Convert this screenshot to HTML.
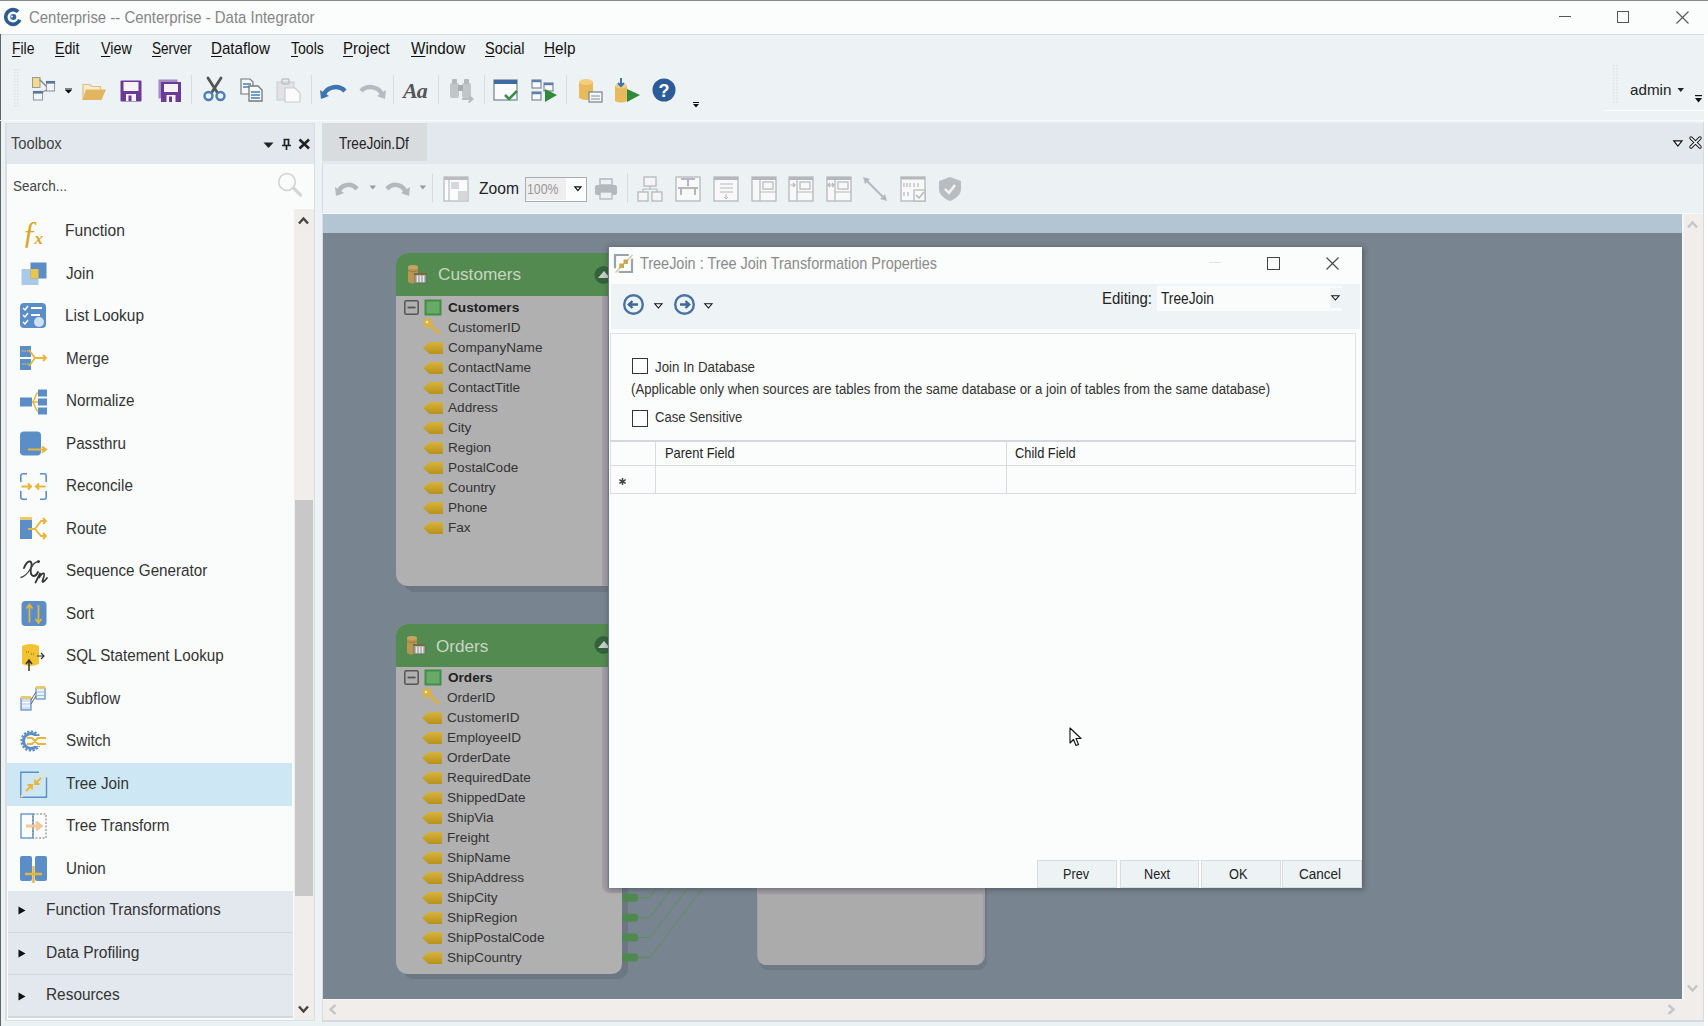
<!DOCTYPE html><html><head><meta charset="utf-8"><style>
html,body{margin:0;padding:0;}
body{width:1708px;height:1026px;position:relative;overflow:hidden;background:#edf2f4;font-family:"Liberation Sans",sans-serif;}
.t{position:absolute;white-space:nowrap;line-height:1.15;}
.b{position:absolute;}
.s{position:absolute;overflow:visible;}
u{text-decoration:underline;text-decoration-thickness:1.4px;text-underline-offset:1.6px;}
</style></head><body>
<div class="b" style="left:0px;top:0px;width:1708px;height:35px;background:#fbfcfc;"></div>
<div class="b" style="left:0px;top:0px;width:1708px;height:1px;background:#8a8a8a;"></div>
<div class="b" style="left:0px;top:34px;width:1708px;height:1px;background:#d5dbde;"></div>
<svg class="s" style="left:3px;top:7px;" width="20" height="20" viewBox="0 0 20 20"><circle cx="10" cy="10" r="7.3" fill="none" stroke="#2d5c8c" stroke-width="3.6" stroke-dasharray="37 9" transform="rotate(22 10 10)"/><circle cx="10.3" cy="10" r="3" fill="#3467a0"/><circle cx="9" cy="9.6" r="1.1" fill="#cfe0f0"/></svg>
<div class="t " style="left:28.60px;top:9.00px;font-size:15.7px;color:#858585;font-weight:normal;font-family:'Liberation Sans';transform-origin:0 0;transform:scaleX(0.9516);">Centerprise -- Centerprise - Data Integrator</div>
<div class="b" style="left:1559px;top:16px;width:12px;height:1px;background:#555;"></div>
<div class="b" style="left:1617px;top:11px;width:12px;height:12px;background:transparent;border:1px solid #555;box-sizing:border-box;"></div>
<svg class="s" style="left:1676px;top:11px;" width="13" height="13" viewBox="0 0 13 13"><path d="M0.5 0.5 L12.5 12.5 M12.5 0.5 L0.5 12.5" stroke="#555" stroke-width="1.1"/></svg>
<div class="b" style="left:0px;top:34px;width:1.3px;height:992px;background:#5f6666;"></div>
<div class="t " style="left:12.31px;top:40.00px;font-size:15.7px;color:#111;font-weight:normal;font-family:'Liberation Sans';transform-origin:0 0;transform:scaleX(0.8879);"><u>F</u>ile</div>
<div class="t " style="left:55.00px;top:40.00px;font-size:15.7px;color:#111;font-weight:normal;font-family:'Liberation Sans';transform-origin:0 0;transform:scaleX(0.9035);"><u>E</u>dit</div>
<div class="t " style="left:100.50px;top:40.00px;font-size:15.7px;color:#111;font-weight:normal;font-family:'Liberation Sans';transform-origin:0 0;transform:scaleX(0.9102);"><u>V</u>iew</div>
<div class="t " style="left:152.00px;top:40.00px;font-size:15.7px;color:#111;font-weight:normal;font-family:'Liberation Sans';transform-origin:0 0;transform:scaleX(0.8612);"><u>S</u>erver</div>
<div class="t " style="left:211.03px;top:40.00px;font-size:15.7px;color:#111;font-weight:normal;font-family:'Liberation Sans';transform-origin:0 0;transform:scaleX(0.9653);"><u>D</u>ataflow</div>
<div class="t " style="left:290.90px;top:40.00px;font-size:15.7px;color:#111;font-weight:normal;font-family:'Liberation Sans';transform-origin:0 0;transform:scaleX(0.8973);"><u>T</u>ools</div>
<div class="t " style="left:343.14px;top:40.00px;font-size:15.7px;color:#111;font-weight:normal;font-family:'Liberation Sans';transform-origin:0 0;transform:scaleX(0.9553);"><u>P</u>roject</div>
<div class="t " style="left:410.60px;top:40.00px;font-size:15.7px;color:#111;font-weight:normal;font-family:'Liberation Sans';transform-origin:0 0;transform:scaleX(0.9705);"><u>W</u>indow</div>
<div class="t " style="left:485.30px;top:40.00px;font-size:15.7px;color:#111;font-weight:normal;font-family:'Liberation Sans';transform-origin:0 0;transform:scaleX(0.9233);"><u>S</u>ocial</div>
<div class="t " style="left:543.52px;top:40.00px;font-size:15.7px;color:#111;font-weight:normal;font-family:'Liberation Sans';transform-origin:0 0;transform:scaleX(0.9766);"><u>H</u>elp</div>
<svg class="s" style="left:13px;top:68px;" width="10" height="40" viewBox="0 0 10 40"><rect x="1" y="1" width="1.5" height="1.5" fill="#dde2e5"/><rect x="4" y="1" width="1.5" height="1.5" fill="#dde2e5"/><rect x="1" y="4" width="1.5" height="1.5" fill="#dde2e5"/><rect x="4" y="4" width="1.5" height="1.5" fill="#dde2e5"/><rect x="1" y="7" width="1.5" height="1.5" fill="#dde2e5"/><rect x="4" y="7" width="1.5" height="1.5" fill="#dde2e5"/><rect x="1" y="10" width="1.5" height="1.5" fill="#dde2e5"/><rect x="4" y="10" width="1.5" height="1.5" fill="#dde2e5"/><rect x="1" y="13" width="1.5" height="1.5" fill="#dde2e5"/><rect x="4" y="13" width="1.5" height="1.5" fill="#dde2e5"/><rect x="1" y="16" width="1.5" height="1.5" fill="#dde2e5"/><rect x="4" y="16" width="1.5" height="1.5" fill="#dde2e5"/><rect x="1" y="19" width="1.5" height="1.5" fill="#dde2e5"/><rect x="4" y="19" width="1.5" height="1.5" fill="#dde2e5"/><rect x="1" y="22" width="1.5" height="1.5" fill="#dde2e5"/><rect x="4" y="22" width="1.5" height="1.5" fill="#dde2e5"/><rect x="1" y="25" width="1.5" height="1.5" fill="#dde2e5"/><rect x="4" y="25" width="1.5" height="1.5" fill="#dde2e5"/><rect x="1" y="28" width="1.5" height="1.5" fill="#dde2e5"/><rect x="4" y="28" width="1.5" height="1.5" fill="#dde2e5"/><rect x="1" y="31" width="1.5" height="1.5" fill="#dde2e5"/><rect x="4" y="31" width="1.5" height="1.5" fill="#dde2e5"/><rect x="1" y="34" width="1.5" height="1.5" fill="#dde2e5"/><rect x="4" y="34" width="1.5" height="1.5" fill="#dde2e5"/><rect x="1" y="37" width="1.5" height="1.5" fill="#dde2e5"/><rect x="4" y="37" width="1.5" height="1.5" fill="#dde2e5"/></svg>
<svg class="s" style="left:31px;top:76px;" width="26" height="26" viewBox="0 0 26 26"><rect x="1.5" y="1.5" width="7.5" height="10" fill="#f2d98c" stroke="#9a9a9a" stroke-width="1"/><path d="M8.5 3.5 L15.5 10.5" stroke="#888" stroke-width="1.4"/><rect x="15.5" y="5.5" width="8" height="9.5" fill="#f4f5f6" stroke="#9aa0a8" stroke-width="1.2"/><rect x="15" y="5" width="9" height="2.6" fill="#58779e"/><rect x="2.5" y="15.5" width="9" height="8.5" fill="#f4f5f6" stroke="#9aa0a8" stroke-width="1.2"/><rect x="2" y="15" width="10" height="2.6" fill="#58779e"/><path d="M15.5 14 L11.5 16" stroke="#888" stroke-width="1.2"/></svg>
<svg class="s" style="left:64px;top:88px;" width="9" height="6" viewBox="0 0 9 6"><rect x="1" y="0.5" width="7" height="1" fill="#111"/><path d="M1 2 L8 2 L4.5 5.5 Z" fill="#111"/></svg>
<svg class="s" style="left:81px;top:80px;" width="26" height="22" viewBox="0 0 26 22"><path d="M2 20 V4.5 H9 L11 6.5 H19.5 V10" fill="#f6ead0" stroke="#dcc08a" stroke-width="1.2"/><path d="M5 9.5 H25 L20.5 20 H1.5 Z" fill="#e2b560"/></svg>
<svg class="s" style="left:120px;top:80px;" width="22" height="22" viewBox="0 0 22 22"><rect x="0.5" y="0.5" width="21" height="21" rx="1" fill="#6b3a99"/><rect x="3.5" y="2" width="15" height="9" fill="#f6f3f8"/><rect x="6" y="14" width="10" height="7" fill="#f6f3f8"/><rect x="8.5" y="15.5" width="3" height="5.5" fill="#6b3a99"/></svg>
<svg class="s" style="left:158px;top:79px;" width="23" height="23" viewBox="0 0 23 23"><rect x="0.5" y="0.5" width="19" height="19" fill="#a48dc2"/><g transform="translate(3 3)"><rect x="0" y="0" width="20" height="20" fill="#6b3a99"/><rect x="3" y="2" width="14" height="8" fill="#f6f3f8"/><rect x="5.5" y="13" width="9" height="7" fill="#f6f3f8"/><rect x="8" y="14.5" width="3" height="5.5" fill="#6b3a99"/></g></svg>
<div class="b" style="left:191px;top:75px;width:1px;height:29px;background:#d6dcdf;"></div>
<svg class="s" style="left:202px;top:77px;" width="26" height="26" viewBox="0 0 26 26"><path d="M6 1 L15 15 M19 1 L10 15" stroke="#555" stroke-width="2.8" stroke-linecap="round"/><circle cx="6.5" cy="19" r="4" fill="none" stroke="#4a7fb5" stroke-width="2.4"/><circle cx="18.5" cy="19" r="4" fill="none" stroke="#4a7fb5" stroke-width="2.4"/></svg>
<svg class="s" style="left:240px;top:78px;" width="24" height="24" viewBox="0 0 24 24"><path d="M1 1 L10 1 L13 4 L13 16 L1 16 Z" fill="#f7f8fa" stroke="#777" stroke-width="1.2"/><path d="M3 6 H11 M3 9 H11" stroke="#4a7fb5" stroke-width="1.5"/><path d="M9 8 L18 8 L22 12 L22 23 L9 23 Z" fill="#f7f8fa" stroke="#777" stroke-width="1.3"/><path d="M11 14 H20 M11 17 H20 M11 20 H20" stroke="#4a7fb5" stroke-width="1.5"/></svg>
<svg class="s" style="left:276px;top:78px;" width="26" height="24" viewBox="0 0 26 24"><rect x="1" y="4" width="17" height="18" fill="#e0e2e4" stroke="#c9cccf" stroke-width="1"/><rect x="6" y="1" width="7" height="5" rx="1" fill="none" stroke="#bfc3c6" stroke-width="1.5"/><path d="M9 10 L19 10 L24 15 L24 24 L9 24 Z" fill="#fbfbfc" stroke="#c9cccf" stroke-width="1.2"/></svg>
<div class="b" style="left:311px;top:75px;width:1px;height:29px;background:#d6dcdf;"></div>
<svg class="s" style="left:320px;top:82px;" width="27" height="18" viewBox="0 0 27 18"><path d="M3 15 C5 5 18 2 25 9" fill="none" stroke="#3f74b3" stroke-width="4.5"/><path d="M0 8 L9 14 L1 17 Z" fill="#3f74b3"/></svg>
<svg class="s" style="left:359px;top:82px;" width="27" height="18" viewBox="0 0 27 18"><path d="M2 9 C9 2 22 5 24 15" fill="none" stroke="#b7bbbf" stroke-width="4.5"/><path d="M27 8 L18 14 L26 17 Z" fill="#b7bbbf"/></svg>
<div class="b" style="left:393px;top:75px;width:1px;height:29px;background:#d6dcdf;"></div>
<div class="t" style="left:403px;top:78px;font-family:'Liberation Serif',serif;font-style:italic;font-weight:bold;font-size:22px;color:#555;letter-spacing:-1px;">Aa</div>
<div class="b" style="left:438px;top:75px;width:1px;height:29px;background:#d6dcdf;"></div>
<svg class="s" style="left:449px;top:78px;" width="27" height="26" viewBox="0 0 27 26"><rect x="1" y="5" width="9" height="15" rx="2" fill="#c3c6c9"/><rect x="13" y="5" width="9" height="15" rx="2" fill="#c3c6c9"/><rect x="3" y="1" width="5" height="5" rx="1" fill="#b5b8bb"/><rect x="15" y="1" width="5" height="5" rx="1" fill="#b5b8bb"/><rect x="9" y="7" width="5" height="6" fill="#a9acaf"/><path d="M13 21 H23 M19.5 17.5 L23.5 21 L19.5 24.5" stroke="#b9bcbf" stroke-width="2" fill="none"/></svg>
<div class="b" style="left:484px;top:75px;width:1px;height:29px;background:#d6dcdf;"></div>
<svg class="s" style="left:493px;top:79px;" width="27" height="25" viewBox="0 0 27 25"><rect x="1" y="1" width="23" height="20" fill="#fafbfc" stroke="#7f8a99" stroke-width="1.3"/><rect x="1" y="1" width="23" height="4" fill="#3f6aa0"/><path d="M12 16 L16 20 L24 12" stroke="#3d8a4a" stroke-width="2.5" fill="none"/></svg>
<svg class="s" style="left:531px;top:79px;" width="27" height="25" viewBox="0 0 27 25"><rect x="1" y="1" width="9" height="8" fill="#f6f8fa" stroke="#7f8a99" stroke-width="1.2"/><rect x="1" y="1" width="9" height="2.2" fill="#5a7fb0"/><rect x="13" y="4" width="9" height="8" fill="#f6f8fa" stroke="#7f8a99" stroke-width="1.2"/><rect x="13" y="4" width="9" height="2.2" fill="#5a7fb0"/><rect x="1" y="13" width="9" height="8" fill="#f6f8fa" stroke="#7f8a99" stroke-width="1.2"/><rect x="1" y="13" width="9" height="2.2" fill="#5a7fb0"/><path d="M14 10 L26 16 L14 23 Z" fill="#2f8a3a"/></svg>
<div class="b" style="left:566px;top:75px;width:1px;height:29px;background:#d6dcdf;"></div>
<svg class="s" style="left:578px;top:78px;" width="26" height="26" viewBox="0 0 26 26"><path d="M1 4 Q8 0 15 4 L15 20 Q8 24 1 20 Z" fill="#e8b95d"/><ellipse cx="8" cy="4" rx="7" ry="3" fill="#f2cf80"/><rect x="11" y="14" width="13" height="10" fill="#f7f8fa" stroke="#7f8a99" stroke-width="1.3"/><path d="M13 18 H22 M13 21 H22" stroke="#7f8a99" stroke-width="1"/></svg>
<svg class="s" style="left:614px;top:78px;" width="28" height="26" viewBox="0 0 28 26"><path d="M1 8 Q7 5 13 8 L13 23 Q7 26 1 23 Z" fill="#e8b95d"/><ellipse cx="7" cy="8" rx="6" ry="2.5" fill="#f2cf80"/><path d="M7 0 L7 8 M4 5 L7 8 L10 5" stroke="#3f74b3" stroke-width="2" fill="none"/><path d="M13 11 L26 17 L13 24 Z" fill="#2f8a3a"/></svg>
<svg class="s" style="left:652px;top:78px;" width="25" height="25" viewBox="0 0 25 25"><circle cx="12" cy="12" r="11.5" fill="#2b5c98"/><text x="12" y="19" text-anchor="middle" font-family="Liberation Sans" font-weight="bold" font-size="18" fill="#fff">?</text></svg>
<svg class="s" style="left:692px;top:101px;" width="8" height="8" viewBox="0 0 8 8"><rect x="1" y="1" width="6" height="1" fill="#111"/><path d="M1 3 L7 3 L4 6.5 Z" fill="#111"/></svg>
<svg class="s" style="left:1612px;top:64px;" width="8" height="40" viewBox="0 0 8 40"><rect x="1" y="1" width="1.5" height="1.5" fill="#dde2e5"/><rect x="4" y="1" width="1.5" height="1.5" fill="#dde2e5"/><rect x="1" y="4" width="1.5" height="1.5" fill="#dde2e5"/><rect x="4" y="4" width="1.5" height="1.5" fill="#dde2e5"/><rect x="1" y="7" width="1.5" height="1.5" fill="#dde2e5"/><rect x="4" y="7" width="1.5" height="1.5" fill="#dde2e5"/><rect x="1" y="10" width="1.5" height="1.5" fill="#dde2e5"/><rect x="4" y="10" width="1.5" height="1.5" fill="#dde2e5"/><rect x="1" y="13" width="1.5" height="1.5" fill="#dde2e5"/><rect x="4" y="13" width="1.5" height="1.5" fill="#dde2e5"/><rect x="1" y="16" width="1.5" height="1.5" fill="#dde2e5"/><rect x="4" y="16" width="1.5" height="1.5" fill="#dde2e5"/><rect x="1" y="19" width="1.5" height="1.5" fill="#dde2e5"/><rect x="4" y="19" width="1.5" height="1.5" fill="#dde2e5"/><rect x="1" y="22" width="1.5" height="1.5" fill="#dde2e5"/><rect x="4" y="22" width="1.5" height="1.5" fill="#dde2e5"/><rect x="1" y="25" width="1.5" height="1.5" fill="#dde2e5"/><rect x="4" y="25" width="1.5" height="1.5" fill="#dde2e5"/><rect x="1" y="28" width="1.5" height="1.5" fill="#dde2e5"/><rect x="4" y="28" width="1.5" height="1.5" fill="#dde2e5"/><rect x="1" y="31" width="1.5" height="1.5" fill="#dde2e5"/><rect x="4" y="31" width="1.5" height="1.5" fill="#dde2e5"/><rect x="1" y="34" width="1.5" height="1.5" fill="#dde2e5"/><rect x="4" y="34" width="1.5" height="1.5" fill="#dde2e5"/><rect x="1" y="37" width="1.5" height="1.5" fill="#dde2e5"/><rect x="4" y="37" width="1.5" height="1.5" fill="#dde2e5"/></svg>
<div class="t " style="left:1630.00px;top:81.00px;font-size:15px;color:#222;font-weight:normal;font-family:'Liberation Sans';transform-origin:0 0;transform:scaleX(1.0120);">admin</div>
<svg class="s" style="left:1677px;top:87px;" width="8" height="6" viewBox="0 0 8 6"><path d="M0.5 1 L7 1 L3.8 5 Z" fill="#222"/></svg>
<svg class="s" style="left:1694px;top:94px;" width="9" height="10" viewBox="0 0 9 10"><rect x="1" y="1" width="7" height="1.2" fill="#111"/><path d="M1 4 L8 4 L4.5 8.5 Z" fill="#111"/></svg>
<div class="b" style="left:1604px;top:110px;width:104px;height:1px;background:#fafcfd;"></div>
<div class="b" style="left:0px;top:120px;width:1708px;height:1px;background:#f8fafb;"></div>
<div class="b" style="left:5px;top:123px;width:310px;height:898px;background:#d9dee2;"></div>
<div class="b" style="left:7px;top:124px;width:307px;height:40px;background:#e3e8ee;"></div>
<div class="t " style="left:11.10px;top:135.00px;font-size:16px;color:#444;font-weight:normal;font-family:'Liberation Sans';transform-origin:0 0;transform:scaleX(0.9193);">Toolbox</div>
<svg class="s" style="left:263px;top:142px;" width="11" height="7" viewBox="0 0 11 7"><path d="M0.5 0.5 L10.5 0.5 L5.5 6 Z" fill="#222"/></svg>
<svg class="s" style="left:281px;top:138px;" width="11" height="13" viewBox="0 0 11 13"><path d="M2.5 1.5 H8.5 M3.5 1.5 V7 M7.5 1.5 V7 M1 7.5 H10 M5.5 7.5 V12" stroke="#222" stroke-width="1.7" fill="none"/></svg>
<svg class="s" style="left:298px;top:138px;" width="13" height="12" viewBox="0 0 13 12"><path d="M1.5 1.5 L11 10.5 M11 1.5 L1.5 10.5" stroke="#222" stroke-width="2.6"/></svg>
<div class="b" style="left:7px;top:164px;width:307px;height:856px;background:#fafcfc;"></div>
<div class="t " style="left:13.20px;top:177.00px;font-size:15.2px;color:#444;font-weight:normal;font-family:'Liberation Sans';transform-origin:0 0;transform:scaleX(0.8865);">Search...</div>
<svg class="s" style="left:276px;top:170px;" width="28" height="28" viewBox="0 0 28 28"><circle cx="11" cy="12" r="8.3" fill="none" stroke="#d5d5d5" stroke-width="1.7"/><path d="M17.5 18 L24.5 25" stroke="#d5d5d5" stroke-width="3.2" stroke-linecap="round"/></svg>
<div class="b" style="left:294px;top:209px;width:20px;height:811px;background:#f0edea;"></div>
<div class="b" style="left:294.5px;top:500px;width:18.5px;height:396px;background:#c8c8c8;"></div>
<svg class="s" style="left:298px;top:216px;" width="11" height="9" viewBox="0 0 11 9"><path d="M1 7.5 L5.5 2.5 L10 7.5" stroke="#444" stroke-width="2.4" fill="none"/></svg>
<svg class="s" style="left:298px;top:1005px;" width="11" height="9" viewBox="0 0 11 9"><path d="M1 1.5 L5.5 6.5 L10 1.5" stroke="#444" stroke-width="2.4" fill="none"/></svg>
<div class="b" style="left:7px;top:763px;width:285px;height:43px;background:#cde8f4;"></div>
<svg class="s" style="left:20px;top:218px;" width="28" height="28" viewBox="0 0 28 28"><text x="2" y="25" font-family="Liberation Serif" font-style="italic" font-size="31" fill="#d9a62a">&#402;</text><text x="14.5" y="26" font-family="Liberation Serif" font-style="italic" font-weight="bold" font-size="17" fill="#d9a62a">x</text></svg>
<div class="t " style="left:64.94px;top:221.00px;font-size:16.3px;color:#333;font-weight:normal;font-family:'Liberation Sans';transform-origin:0 0;transform:scaleX(0.9588);">Function</div>
<svg class="s" style="left:20px;top:260px;" width="28" height="28" viewBox="0 0 28 28"><rect x="1.5" y="9" width="17" height="16" fill="#a9c9e9"/><rect x="10.5" y="2.5" width="16" height="16" fill="#5b8ec6"/><rect x="10.5" y="9" width="8" height="9.5" fill="#eec44a"/></svg>
<div class="t " style="left:66.30px;top:264.00px;font-size:16.3px;color:#333;font-weight:normal;font-family:'Liberation Sans';transform-origin:0 0;transform:scaleX(0.935);">Join</div>
<svg class="s" style="left:20px;top:303px;" width="28" height="28" viewBox="0 0 28 28"><rect x="0" y="0" width="26" height="25" rx="4" fill="#5b8ec6"/><path d="M3 5 L5 7 L8 3 M3 12 L5 14 L8 10 M3 19 L5 21 L8 17" stroke="#fff" stroke-width="1.4" fill="none"/><path d="M11 5 H22 M11 12 H20" stroke="#fff" stroke-width="2"/><circle cx="19" cy="19" r="5" fill="#cfe2f5"/></svg>
<div class="t " style="left:64.95px;top:306.00px;font-size:16.3px;color:#333;font-weight:normal;font-family:'Liberation Sans';transform-origin:0 0;transform:scaleX(0.9487);">List Lookup</div>
<svg class="s" style="left:20px;top:346px;" width="28" height="28" viewBox="0 0 28 28"><rect x="0" y="0" width="11" height="11" fill="#5b8ec6"/><rect x="0" y="13" width="11" height="11" fill="#5b8ec6"/><path d="M2 5 H9 M2 18 H9" stroke="#e9c96a" stroke-width="1" stroke-dasharray="1.5 1"/><path d="M9 4 L15 12 L9 20 M15 12 H26 M23 9 L26 12 L23 15" stroke="#e7b53b" stroke-width="1.8" fill="none"/></svg>
<div class="t " style="left:66.30px;top:349.00px;font-size:16.3px;color:#333;font-weight:normal;font-family:'Liberation Sans';transform-origin:0 0;transform:scaleX(0.935);">Merge</div>
<svg class="s" style="left:20px;top:388px;" width="28" height="28" viewBox="0 0 28 28"><g transform="translate(0 1.5)"><rect x="0" y="8" width="12" height="9" fill="#5b8ec6"/><rect x="18" y="0" width="9" height="7" fill="#5b8ec6"/><rect x="18" y="9" width="9" height="7" fill="#5b8ec6"/><rect x="18" y="18" width="9" height="7" fill="#5b8ec6"/><path d="M12 12.5 C15 12.5 15 3.5 18 3.5 M12 12.5 H18 M12 12.5 C15 12.5 15 21.5 18 21.5" stroke="#e7b53b" stroke-width="1.5" fill="none"/></g></svg>
<div class="t " style="left:66.30px;top:391.00px;font-size:16.3px;color:#333;font-weight:normal;font-family:'Liberation Sans';transform-origin:0 0;transform:scaleX(0.935);">Normalize</div>
<svg class="s" style="left:20px;top:430px;" width="28" height="28" viewBox="0 0 28 28"><g transform="translate(0 1.5)"><rect x="0" y="0" width="21" height="24" rx="4" fill="#5b8ec6"/><path d="M8 18 H25 M22 15 L26 18 L22 21" stroke="#e7b53b" stroke-width="2" fill="none"/></g></svg>
<div class="t " style="left:66.30px;top:434.00px;font-size:16.3px;color:#333;font-weight:normal;font-family:'Liberation Sans';transform-origin:0 0;transform:scaleX(0.935);">Passthru</div>
<svg class="s" style="left:20px;top:473px;" width="28" height="28" viewBox="0 0 28 28"><path d="M7 0.8 H3 Q0.8 0.8 0.8 3 V9 M0.8 18 V24 Q0.8 26.2 3 26.2 H7 M20 0.8 H24 Q26.2 0.8 26.2 3 V9 M26.2 18 V24 Q26.2 26.2 24 26.2 H20" stroke="#5b8ec6" stroke-width="1.6" fill="none"/><path d="M1.5 13.5 H11 M8 10.5 L11 13.5 L8 16.5 M25.5 13.5 H16 M19 10.5 L16 13.5 L19 16.5" stroke="#e7b53b" stroke-width="2" fill="none"/></svg>
<div class="t " style="left:66.30px;top:476.00px;font-size:16.3px;color:#333;font-weight:normal;font-family:'Liberation Sans';transform-origin:0 0;transform:scaleX(0.935);">Reconcile</div>
<svg class="s" style="left:20px;top:516px;" width="28" height="28" viewBox="0 0 28 28"><rect x="0" y="4" width="12" height="19" fill="#5b8ec6"/><rect x="0" y="1" width="12" height="3" fill="#e9c96a"/><path d="M8 13 L15 13 L21 5 H26 M15 13 L21 20 H26 M23 2 L26 5 L23 8 M23 17 L26 20 L23 23" stroke="#e7b53b" stroke-width="1.8" fill="none"/></svg>
<div class="t " style="left:66.30px;top:519.00px;font-size:16.3px;color:#333;font-weight:normal;font-family:'Liberation Sans';transform-origin:0 0;transform:scaleX(0.935);">Route</div>
<svg class="s" style="left:20px;top:558px;" width="28" height="28" viewBox="0 0 28 28"><path d="M4 10 C6 5 8 3 10 3.5 C12 4 12 7 11 10 C10 14 11 18 14 18 C16 18 17 16 18 14" stroke="#333" stroke-width="1.9" fill="none" stroke-linecap="round"/><path d="M0.5 19.5 C4 19 8 15 11 10 C13 6 15 4 18.5 3.5" stroke="#444" stroke-width="1.3" fill="none"/><circle cx="18.5" cy="3.6" r="1.4" fill="#222"/><path d="M15.5 24.5 L20 15.5 M19.3 19.5 C21 16 23 15 24 15.5 C25 16 23 21 22.5 23 C22 25 24 24 27 20" stroke="#333" stroke-width="1.7" fill="none" stroke-linecap="round"/></svg>
<div class="t " style="left:66.30px;top:561.00px;font-size:16.3px;color:#333;font-weight:normal;font-family:'Liberation Sans';transform-origin:0 0;transform:scaleX(0.935);">Sequence Generator</div>
<svg class="s" style="left:20px;top:600px;" width="28" height="28" viewBox="0 0 28 28"><g transform="translate(1.5 1)"><rect x="0" y="0" width="25" height="25" rx="4" fill="#5b8ec6"/><path d="M8 21.5 V4 M5 7.5 L8 3.5 L11 7.5 M17 4 V21.5 M14 18 L17 22 L20 18" stroke="#e7b53b" stroke-width="1.7" fill="none"/></g></svg>
<div class="t " style="left:66.30px;top:604.00px;font-size:16.3px;color:#333;font-weight:normal;font-family:'Liberation Sans';transform-origin:0 0;transform:scaleX(0.935);">Sort</div>
<svg class="s" style="left:20px;top:643px;" width="28" height="28" viewBox="0 0 28 28"><path d="M2 3 Q10 -1 19 3 L19 21 Q10 25 2 21 Z" fill="#f1c232"/><path d="M6 9 H10 M11 11 H15" stroke="#8a6a10" stroke-width="1" stroke-dasharray="1 1"/><path d="M17 13 H24 M21 10 L24 13 L21 16" stroke="#333" stroke-width="1.2" fill="none"/><path d="M9 28 V18 M6 21 L9 17 L12 21" stroke="#333" stroke-width="1.5" fill="none"/></svg>
<div class="t " style="left:66.30px;top:646.00px;font-size:16.3px;color:#333;font-weight:normal;font-family:'Liberation Sans';transform-origin:0 0;transform:scaleX(0.935);">SQL Statement Lookup</div>
<svg class="s" style="left:20px;top:686px;" width="28" height="28" viewBox="0 0 28 28"><rect x="1" y="12" width="10" height="12" fill="#cfe0f2" stroke="#5b8ec6" stroke-width="1.2"/><rect x="1" y="10" width="10" height="3" fill="#e9c96a"/><path d="M2 16.5 H10 M2 20 H10" stroke="#fff" stroke-width="1"/><rect x="16" y="2" width="9" height="11" fill="#eaf2fa" stroke="#5b8ec6" stroke-width="1.2"/><rect x="16" y="0" width="9" height="3" fill="#e9c96a"/><path d="M17 6 H24 M17 9.5 H24" stroke="#9dbde0" stroke-width="1"/><path d="M11 14 L16 6 M11 18 L16 10" stroke="#666" stroke-width="1"/></svg>
<div class="t " style="left:66.30px;top:689.00px;font-size:16.3px;color:#333;font-weight:normal;font-family:'Liberation Sans';transform-origin:0 0;transform:scaleX(0.935);">Subflow</div>
<svg class="s" style="left:20px;top:728px;" width="28" height="28" viewBox="0 0 28 28"><circle cx="11" cy="13" r="9.5" fill="none" stroke="#5b8ec6" stroke-width="2.2" stroke-dasharray="2.2 1.5"/><circle cx="11" cy="13" r="7.5" fill="none" stroke="#5b8ec6" stroke-width="3"/><rect x="10" y="8" width="17" height="10" fill="#fafcfc"/><path d="M7 10 H12 L18 16 H26 M7 16 H12 L18 10 H26" stroke="#e7b53b" stroke-width="2" fill="none"/></svg>
<div class="t " style="left:66.30px;top:731.00px;font-size:16.3px;color:#333;font-weight:normal;font-family:'Liberation Sans';transform-origin:0 0;transform:scaleX(0.935);">Switch</div>
<svg class="s" style="left:20px;top:770px;" width="28" height="28" viewBox="0 0 28 28"><path d="M19 2.2 H0.8 V27.2 H26.5 V7.5" stroke="#5b8ec6" stroke-width="1.4" fill="none"/><path d="M1 27 L26 2" stroke="#f3dfb5" stroke-width="2.2" stroke-dasharray="2 1.2"/><path d="M21 8 L15 14 M15 9.5 V14 H19.5 M6 21 L12 15 M12 19.5 V15 H7.5" stroke="#e7b53b" stroke-width="1.8" fill="none"/></svg>
<div class="t " style="left:66.30px;top:774.00px;font-size:16.3px;color:#333;font-weight:normal;font-family:'Liberation Sans';transform-origin:0 0;transform:scaleX(0.935);">Tree Join</div>
<svg class="s" style="left:20px;top:813px;" width="28" height="28" viewBox="0 0 28 28"><rect x="1" y="1" width="12" height="24" fill="none" stroke="#5b8ec6" stroke-width="1.3"/><rect x="13" y="1" width="13" height="24" fill="none" stroke="#777" stroke-width="1" stroke-dasharray="2 1.5"/><path d="M6 13 H19 M16 9 L21 13 L16 17" stroke="#f0c89a" stroke-width="3" fill="none"/></svg>
<div class="t " style="left:66.30px;top:816.00px;font-size:16.3px;color:#333;font-weight:normal;font-family:'Liberation Sans';transform-origin:0 0;transform:scaleX(0.935);">Tree Transform</div>
<svg class="s" style="left:20px;top:856px;" width="28" height="28" viewBox="0 0 28 28"><rect x="0" y="0" width="12" height="25" rx="2" fill="#5b8ec6"/><rect x="15" y="0" width="12" height="25" rx="2" fill="#5b8ec6"/><path d="M13.5 10 V27 M5 18 H22" stroke="#e7b53b" stroke-width="2.4"/></svg>
<div class="t " style="left:66.30px;top:859.00px;font-size:16.3px;color:#333;font-weight:normal;font-family:'Liberation Sans';transform-origin:0 0;transform:scaleX(0.935);">Union</div>
<div class="b" style="left:7.5px;top:890.5px;width:285px;height:126px;background:#e3e8ee;"></div>
<div class="b" style="left:7.5px;top:931.5px;width:285px;height:1.2px;background:#d3d8dc;"></div>
<div class="b" style="left:7.5px;top:974px;width:285px;height:1.2px;background:#d3d8dc;"></div>
<div class="b" style="left:7.5px;top:1016px;width:285px;height:1.5px;background:#d3d8dc;"></div>
<svg class="s" style="left:18px;top:906px;" width="8" height="9" viewBox="0 0 8 9"><path d="M0.5 0.5 L7.5 4.5 L0.5 8.5 Z" fill="#111"/></svg>
<div class="t " style="left:46.35px;top:900.00px;font-size:16.3px;color:#333;font-weight:normal;font-family:'Liberation Sans';transform-origin:0 0;transform:scaleX(0.9511);">Function Transformations</div>
<svg class="s" style="left:18px;top:949px;" width="8" height="9" viewBox="0 0 8 9"><path d="M0.5 0.5 L7.5 4.5 L0.5 8.5 Z" fill="#111"/></svg>
<div class="t " style="left:46.34px;top:943.00px;font-size:16.3px;color:#333;font-weight:normal;font-family:'Liberation Sans';transform-origin:0 0;transform:scaleX(0.9553);">Data Profiling</div>
<svg class="s" style="left:18px;top:992px;" width="8" height="9" viewBox="0 0 8 9"><path d="M0.5 0.5 L7.5 4.5 L0.5 8.5 Z" fill="#111"/></svg>
<div class="t " style="left:46.35px;top:985.00px;font-size:16.3px;color:#333;font-weight:normal;font-family:'Liberation Sans';transform-origin:0 0;transform:scaleX(0.9455);">Resources</div>
<div class="b" style="left:322px;top:122.5px;width:1382px;height:41.5px;background:#e3e8ee;"></div>
<div class="b" style="left:322px;top:123px;width:104.5px;height:38px;background:#d9dcdf;"></div>
<div class="t " style="left:338.70px;top:135.00px;font-size:16px;color:#222;font-weight:normal;font-family:'Liberation Sans';transform-origin:0 0;transform:scaleX(0.8493);">TreeJoin.Df</div>
<svg class="s" style="left:1673px;top:140px;" width="10" height="7" viewBox="0 0 10 7"><path d="M0.8 0.8 L9 0.8 L4.9 6 Z" fill="#fff" stroke="#111" stroke-width="1.2"/></svg>
<svg class="s" style="left:1689px;top:136px;" width="13" height="13" viewBox="0 0 13 13"><path d="M2 2 L11 11 M11 2 L2 11" stroke="#111" stroke-width="3.4" stroke-linecap="round"/><path d="M2 2 L11 11 M11 2 L2 11" stroke="#fff" stroke-width="1.6" stroke-linecap="round"/></svg>
<div class="b" style="left:322px;top:164px;width:1381px;height:49px;background:#ecf2f4;"></div>
<div class="b" style="left:322px;top:164px;width:1px;height:856px;background:#d5dbe0;"></div>
<svg class="s" style="left:334px;top:179px;" width="26" height="18" viewBox="0 0 26 18"><path d="M4 15 C6 5 17 3 23 10" fill="none" stroke="#b4b8bc" stroke-width="4.5"/><path d="M1 8 L10 14 L2 17 Z" fill="#b4b8bc"/></svg>
<svg class="s" style="left:369px;top:185px;" width="8" height="5" viewBox="0 0 8 5"><path d="M0.5 0.5 L7 0.5 L3.8 4.5 Z" fill="#999"/></svg>
<svg class="s" style="left:385px;top:179px;" width="26" height="18" viewBox="0 0 26 18"><path d="M2 10 C8 3 19 5 21 15" fill="none" stroke="#b4b8bc" stroke-width="4.5"/><path d="M25 8 L16 14 L24 17 Z" fill="#b4b8bc"/></svg>
<svg class="s" style="left:419px;top:185px;" width="8" height="5" viewBox="0 0 8 5"><path d="M0.5 0.5 L7 0.5 L3.8 4.5 Z" fill="#999"/></svg>
<div class="b" style="left:432px;top:173px;width:1px;height:30px;background:#d6dcdf;"></div>
<svg class="s" style="left:443px;top:176px;" width="26" height="26" viewBox="0 0 26 26"><rect x="1" y="1" width="24" height="24" fill="#fbfbfb" stroke="#b9bcbf" stroke-width="1.3"/><rect x="1" y="1" width="24" height="3" fill="#b9bcbf"/><path d="M6 4 V25" stroke="#b9bcbf" stroke-width="1.2"/><rect x="8" y="6" width="8" height="7" fill="#d5d8db"/><rect x="15" y="15" width="9" height="9" fill="#d5d8db"/></svg>
<div class="t " style="left:479.00px;top:179.00px;font-size:16.2px;color:#222;font-weight:normal;font-family:'Liberation Sans';transform-origin:0 0;transform:scaleX(0.9659);">Zoom</div>
<div class="b" style="left:524.5px;top:176.5px;width:62.5px;height:25px;background:#fbfcfc;border:1.3px solid #a9adb1;box-sizing:border-box;"></div>
<div class="b" style="left:526px;top:178px;width:40px;height:22px;background:#eeeeee;"></div>
<div class="t " style="left:527.14px;top:181.00px;font-size:14.3px;color:#999;font-weight:normal;font-family:'Liberation Sans';transform-origin:0 0;transform:scaleX(0.8646);">100%</div>
<svg class="s" style="left:574px;top:186px;" width="8" height="6" viewBox="0 0 8 6"><path d="M0.8 0.8 L7 0.8 L3.9 4.6 Z" fill="#fff" stroke="#111" stroke-width="1.2"/></svg>
<svg class="s" style="left:594px;top:178px;" width="24" height="22" viewBox="0 0 24 22"><rect x="6" y="1" width="12" height="6" fill="none" stroke="#b4b8bc" stroke-width="1.5"/><rect x="1" y="7" width="22" height="10" rx="2" fill="#b4b8bc"/><rect x="6" y="14" width="12" height="7" fill="#eef1f3" stroke="#b4b8bc" stroke-width="1.3"/></svg>
<div class="b" style="left:627px;top:173px;width:1px;height:30px;background:#d6dcdf;"></div>
<svg class="s" style="left:637px;top:176px;" width="26" height="26" viewBox="0 0 26 26"><rect x="7" y="1" width="12" height="9" fill="#f5f5f5" stroke="#b4b8bc" stroke-width="1.3"/><path d="M13 10 V13 M6 13 H20 M6 13 V16 M20 13 V16" stroke="#b4b8bc" stroke-width="1.2" fill="none"/><rect x="1" y="16" width="10" height="9" fill="#f5f5f5" stroke="#b4b8bc" stroke-width="1.3"/><rect x="15" y="16" width="10" height="9" fill="#f5f5f5" stroke="#b4b8bc" stroke-width="1.3"/></svg>
<svg class="s" style="left:675px;top:176px;" width="26" height="26" viewBox="0 0 26 26"><rect x="1" y="1" width="24" height="24" fill="#f8f8f8" stroke="#b4b8bc" stroke-width="1.3"/><path d="M6 3 H20 M13 3 V10 M3 12 H23 M6 12 V19 M20 12 V19" stroke="#b4b8bc" stroke-width="2" fill="none"/></svg>
<svg class="s" style="left:713px;top:176px;" width="26" height="26" viewBox="0 0 26 26"><rect x="1" y="1" width="24" height="24" fill="#f8f8f8" stroke="#b4b8bc" stroke-width="1.3"/><rect x="1" y="1" width="24" height="3" fill="#b4b8bc"/><path d="M7 8 H20 M7 12 H20 M7 16 H20" stroke="#b4b8bc" stroke-width="1.2"/><path d="M13 18 V23 M11 21 L13 23 L15 21" stroke="#b4b8bc" stroke-width="1" fill="none"/></svg>
<svg class="s" style="left:751px;top:176px;" width="26" height="26" viewBox="0 0 26 26"><rect x="1" y="1" width="24" height="24" fill="#f8f8f8" stroke="#b4b8bc" stroke-width="1.3"/><rect x="1" y="1" width="24" height="3" fill="#b4b8bc"/><path d="M9 4 V25 M9 16 H25" stroke="#b4b8bc" stroke-width="1.2"/><rect x="12" y="6" width="10" height="7" fill="none" stroke="#b4b8bc" stroke-width="1.2"/></svg>
<svg class="s" style="left:788px;top:176px;" width="26" height="26" viewBox="0 0 26 26"><rect x="1" y="1" width="24" height="24" fill="#f8f8f8" stroke="#b4b8bc" stroke-width="1.3"/><rect x="1" y="1" width="24" height="3" fill="#b4b8bc"/><path d="M9 4 V25 M9 16 H25" stroke="#b4b8bc" stroke-width="1.2"/><rect x="12" y="6" width="10" height="7" fill="none" stroke="#b4b8bc" stroke-width="1.2"/><path d="M2 9 H7 M5 7 L7 9 L5 11" stroke="#b4b8bc" stroke-width="1.2" fill="none"/></svg>
<svg class="s" style="left:826px;top:176px;" width="26" height="26" viewBox="0 0 26 26"><rect x="1" y="1" width="24" height="24" fill="#f8f8f8" stroke="#b4b8bc" stroke-width="1.3"/><rect x="1" y="1" width="24" height="3" fill="#b4b8bc"/><path d="M9 4 V25 M9 16 H25" stroke="#b4b8bc" stroke-width="1.2"/><rect x="12" y="6" width="10" height="7" fill="none" stroke="#b4b8bc" stroke-width="1.2"/><path d="M2 9 H8 M6 7 L8 9 L6 11 M4 7 L2 9 L4 11" stroke="#b4b8bc" stroke-width="1.2" fill="none"/></svg>
<svg class="s" style="left:862px;top:176px;" width="26" height="26" viewBox="0 0 26 26"><path d="M3 3 L22 22" stroke="#b4b8bc" stroke-width="2"/><path d="M1 1 L8 3 L3 8 Z M25 25 L18 23 L23 18 Z" fill="#b4b8bc"/></svg>
<svg class="s" style="left:900px;top:176px;" width="26" height="26" viewBox="0 0 26 26"><rect x="1" y="1" width="24" height="24" fill="#f8f8f8" stroke="#b4b8bc" stroke-width="1.3"/><rect x="1" y="1" width="24" height="2.5" fill="#b4b8bc"/><path d="M4 7 V11 M7 7 V11 M10 7 V11 M14 7 V11 M18 7 V11 M4 16 V20 M8 16 V20" stroke="#b4b8bc" stroke-width="1.2"/><rect x="14" y="14" width="11" height="11" fill="#f8f8f8" stroke="#b4b8bc" stroke-width="1.2"/><path d="M16 19 L19 22 L24 16" stroke="#b4b8bc" stroke-width="1.5" fill="none"/></svg>
<svg class="s" style="left:938px;top:176px;" width="26" height="26" viewBox="0 0 26 26"><path d="M12 1 L23 5 V13 C23 19 17 23 12 25 C7 23 1 19 1 13 V5 Z" fill="#b9bdc1"/><path d="M7 13 L11 17 L17 9" stroke="#f5f5f5" stroke-width="2.4" fill="none"/></svg>
<div class="b" style="left:322px;top:213px;width:1381px;height:1px;background:#f6f9fa;"></div>
<div class="b" style="left:323px;top:214px;width:1359px;height:19px;background:#b3c4d3;"></div>
<div class="b" style="left:323px;top:233px;width:1359px;height:766px;background:#78848f;"></div>
<div class="b" style="left:323px;top:998.7px;width:1361px;height:1.5px;background:#f5f7f8;"></div>
<div class="b" style="left:1682px;top:213.5px;width:1.5px;height:786px;background:#f5f7f8;"></div>
<div class="b" style="left:1683.5px;top:213.5px;width:20px;height:807px;background:#f0edea;"></div>
<div class="b" style="left:323px;top:1000px;width:1361px;height:20px;background:#f0edea;"></div>
<div class="b" style="left:322px;top:1020px;width:1382px;height:1.5px;background:#d3dbe0;"></div>
<div class="b" style="left:1703px;top:122px;width:1.5px;height:899px;background:#d5dbe0;"></div>
<div class="b" style="left:1.3px;top:1021.5px;width:1703px;height:5px;background:#ebf2f4;"></div>
<div class="b" style="left:1704px;top:34px;width:4px;height:992px;background:#ffffff;"></div>
<svg class="s" style="left:1687px;top:220px;" width="11" height="9" viewBox="0 0 11 9"><path d="M1 7.5 L5.5 2.5 L10 7.5" stroke="#c4c6c8" stroke-width="2.4" fill="none"/></svg>
<svg class="s" style="left:1687px;top:984px;" width="11" height="9" viewBox="0 0 11 9"><path d="M1 1.5 L5.5 6.5 L10 1.5" stroke="#c4c6c8" stroke-width="2.4" fill="none"/></svg>
<svg class="s" style="left:328px;top:1004px;" width="9" height="11" viewBox="0 0 9 11"><path d="M7.5 1 L2.5 5.5 L7.5 10" stroke="#c4c6c8" stroke-width="2.4" fill="none"/></svg>
<svg class="s" style="left:1667px;top:1004px;" width="9" height="11" viewBox="0 0 9 11"><path d="M1.5 1 L6.5 5.5 L1.5 10" stroke="#c4c6c8" stroke-width="2.4" fill="none"/></svg>
<div class="b" style="left:403px;top:258px;width:212px;height:333.5px;background:rgba(50,58,70,0.16);border-radius:12px 0 0 12px;"></div>
<div class="b" style="left:402px;top:629px;width:226px;height:350px;background:rgba(50,58,70,0.16);border-radius:12px 0 10px 12px;"></div>
<div class="b" style="left:396px;top:253px;width:220px;height:333px;background:#b0b0b0;border-radius:12px 0 0 12px;"></div>
<div class="b" style="left:396px;top:253px;width:220px;height:43px;background:#528a50;border-radius:12px 0 0 0;"></div>
<div class="b" style="left:602px;top:296px;width:14px;height:290px;background:#a39ea5;"></div>
<svg class="s" style="left:407px;top:264px;" width="20" height="20" viewBox="0 0 20 20"><path d="M1 3 Q6 0 11 3 L11 18 Q6 21 1 18 Z" fill="#b89550"/><ellipse cx="6" cy="3" rx="5" ry="2" fill="#c6a461"/><path d="M1 6.5 Q6 9 11 6.5" stroke="#8f7440" stroke-width="0.8" fill="none"/><rect x="8" y="10" width="11" height="9" fill="#b4b8b4" stroke="#5d6a5a" stroke-width="0.8"/><rect x="7" y="9" width="12" height="2" fill="#7d6846"/><path d="M10.5 12 V18 M13.5 12 V18 M16.5 12 V18" stroke="#e8ebe8" stroke-width="1"/></svg>
<div class="t " style="left:437.50px;top:265.00px;font-size:16.8px;color:#c9d6c4;font-weight:normal;font-family:'Liberation Sans';transform-origin:0 0;transform:scaleX(1.0255);">Customers</div>
<svg class="s" style="left:592px;top:265px;" width="24" height="20" viewBox="0 0 24 20"><circle cx="11.5" cy="10" r="9" fill="#33633a"/><path d="M6 13 L12 6 L18 13 Z" fill="#c8cfc6"/></svg>
<svg class="s" style="left:404px;top:299.5px;" width="15" height="15" viewBox="0 0 15 15"><rect x="0.8" y="0.8" width="13.4" height="13.4" rx="1.5" fill="none" stroke="#555" stroke-width="1.5"/><path d="M3.5 7.5 H11.5" stroke="#555" stroke-width="1.8"/></svg>
<svg class="s" style="left:424px;top:299px;" width="18" height="17" viewBox="0 0 18 17"><rect x="0.5" y="0.5" width="17" height="16" fill="#3f8f45"/><rect x="2.5" y="2.5" width="13" height="12" fill="#68aa68"/></svg>
<div class="t " style="left:448.30px;top:300.00px;font-size:13.6px;color:#222;font-weight:bold;font-family:'Liberation Sans';transform-origin:0 0;transform:scaleX(1.0036);">Customers</div>
<svg class="s" style="left:422px;top:317px;" width="20" height="18" viewBox="0 0 20 18"><circle cx="6" cy="6" r="5" fill="#d6b24e"/><path d="M9 9 L17 16" stroke="#d6b24e" stroke-width="3.2" stroke-linecap="round"/><circle cx="5" cy="5" r="1.3" fill="#f4e6b0"/></svg>
<div class="t " style="left:448.00px;top:320.00px;font-size:13.6px;color:#333;font-weight:normal;font-family:'Liberation Sans';">CustomerID</div>
<svg class="s" style="left:423px;top:340.5px;" width="22" height="14" viewBox="0 0 22 14"><defs><linearGradient id="fg" x1="0" y1="0" x2="0" y2="1"><stop offset="0" stop-color="#d6b23e"/><stop offset="1" stop-color="#b8921a"/></linearGradient></defs><path d="M0 7 L6.5 1 H20 V13 H6.5 Z" fill="url(#fg)"/></svg>
<div class="t " style="left:448.00px;top:340.00px;font-size:13.6px;color:#333;font-weight:normal;font-family:'Liberation Sans';">CompanyName</div>
<svg class="s" style="left:423px;top:360.5px;" width="22" height="14" viewBox="0 0 22 14"><defs><linearGradient id="fg" x1="0" y1="0" x2="0" y2="1"><stop offset="0" stop-color="#d6b23e"/><stop offset="1" stop-color="#b8921a"/></linearGradient></defs><path d="M0 7 L6.5 1 H20 V13 H6.5 Z" fill="url(#fg)"/></svg>
<div class="t " style="left:448.00px;top:360.00px;font-size:13.6px;color:#333;font-weight:normal;font-family:'Liberation Sans';">ContactName</div>
<svg class="s" style="left:423px;top:380.5px;" width="22" height="14" viewBox="0 0 22 14"><defs><linearGradient id="fg" x1="0" y1="0" x2="0" y2="1"><stop offset="0" stop-color="#d6b23e"/><stop offset="1" stop-color="#b8921a"/></linearGradient></defs><path d="M0 7 L6.5 1 H20 V13 H6.5 Z" fill="url(#fg)"/></svg>
<div class="t " style="left:448.00px;top:380.00px;font-size:13.6px;color:#333;font-weight:normal;font-family:'Liberation Sans';">ContactTitle</div>
<svg class="s" style="left:423px;top:400.5px;" width="22" height="14" viewBox="0 0 22 14"><defs><linearGradient id="fg" x1="0" y1="0" x2="0" y2="1"><stop offset="0" stop-color="#d6b23e"/><stop offset="1" stop-color="#b8921a"/></linearGradient></defs><path d="M0 7 L6.5 1 H20 V13 H6.5 Z" fill="url(#fg)"/></svg>
<div class="t " style="left:448.00px;top:400.00px;font-size:13.6px;color:#333;font-weight:normal;font-family:'Liberation Sans';">Address</div>
<svg class="s" style="left:423px;top:420.5px;" width="22" height="14" viewBox="0 0 22 14"><defs><linearGradient id="fg" x1="0" y1="0" x2="0" y2="1"><stop offset="0" stop-color="#d6b23e"/><stop offset="1" stop-color="#b8921a"/></linearGradient></defs><path d="M0 7 L6.5 1 H20 V13 H6.5 Z" fill="url(#fg)"/></svg>
<div class="t " style="left:448.00px;top:420.00px;font-size:13.6px;color:#333;font-weight:normal;font-family:'Liberation Sans';">City</div>
<svg class="s" style="left:423px;top:440.5px;" width="22" height="14" viewBox="0 0 22 14"><defs><linearGradient id="fg" x1="0" y1="0" x2="0" y2="1"><stop offset="0" stop-color="#d6b23e"/><stop offset="1" stop-color="#b8921a"/></linearGradient></defs><path d="M0 7 L6.5 1 H20 V13 H6.5 Z" fill="url(#fg)"/></svg>
<div class="t " style="left:448.00px;top:440.00px;font-size:13.6px;color:#333;font-weight:normal;font-family:'Liberation Sans';">Region</div>
<svg class="s" style="left:423px;top:460.5px;" width="22" height="14" viewBox="0 0 22 14"><defs><linearGradient id="fg" x1="0" y1="0" x2="0" y2="1"><stop offset="0" stop-color="#d6b23e"/><stop offset="1" stop-color="#b8921a"/></linearGradient></defs><path d="M0 7 L6.5 1 H20 V13 H6.5 Z" fill="url(#fg)"/></svg>
<div class="t " style="left:448.00px;top:460.00px;font-size:13.6px;color:#333;font-weight:normal;font-family:'Liberation Sans';">PostalCode</div>
<svg class="s" style="left:423px;top:480.5px;" width="22" height="14" viewBox="0 0 22 14"><defs><linearGradient id="fg" x1="0" y1="0" x2="0" y2="1"><stop offset="0" stop-color="#d6b23e"/><stop offset="1" stop-color="#b8921a"/></linearGradient></defs><path d="M0 7 L6.5 1 H20 V13 H6.5 Z" fill="url(#fg)"/></svg>
<div class="t " style="left:448.00px;top:480.00px;font-size:13.6px;color:#333;font-weight:normal;font-family:'Liberation Sans';">Country</div>
<svg class="s" style="left:423px;top:500.5px;" width="22" height="14" viewBox="0 0 22 14"><defs><linearGradient id="fg" x1="0" y1="0" x2="0" y2="1"><stop offset="0" stop-color="#d6b23e"/><stop offset="1" stop-color="#b8921a"/></linearGradient></defs><path d="M0 7 L6.5 1 H20 V13 H6.5 Z" fill="url(#fg)"/></svg>
<div class="t " style="left:448.00px;top:500.00px;font-size:13.6px;color:#333;font-weight:normal;font-family:'Liberation Sans';">Phone</div>
<svg class="s" style="left:423px;top:520.5px;" width="22" height="14" viewBox="0 0 22 14"><defs><linearGradient id="fg" x1="0" y1="0" x2="0" y2="1"><stop offset="0" stop-color="#d6b23e"/><stop offset="1" stop-color="#b8921a"/></linearGradient></defs><path d="M0 7 L6.5 1 H20 V13 H6.5 Z" fill="url(#fg)"/></svg>
<div class="t " style="left:448.00px;top:520.00px;font-size:13.6px;color:#333;font-weight:normal;font-family:'Liberation Sans';">Fax</div>
<div class="b" style="left:396px;top:624px;width:226px;height:350px;background:#b0b0b0;border-radius:12px 0 10px 12px;"></div>
<div class="b" style="left:396px;top:624px;width:226px;height:43px;background:#528a50;border-radius:12px 0 0 0;"></div>
<div class="b" style="left:602px;top:667px;width:20px;height:226px;background:#a39ea5;border-radius:0 0 0 8px;"></div>
<svg class="s" style="left:406px;top:635px;" width="20" height="20" viewBox="0 0 20 20"><path d="M1 3 Q6 0 11 3 L11 18 Q6 21 1 18 Z" fill="#b89550"/><ellipse cx="6" cy="3" rx="5" ry="2" fill="#c6a461"/><path d="M1 6.5 Q6 9 11 6.5" stroke="#8f7440" stroke-width="0.8" fill="none"/><rect x="8" y="10" width="11" height="9" fill="#b4b8b4" stroke="#5d6a5a" stroke-width="0.8"/><rect x="7" y="9" width="12" height="2" fill="#7d6846"/><path d="M10.5 12 V18 M13.5 12 V18 M16.5 12 V18" stroke="#e8ebe8" stroke-width="1"/></svg>
<div class="t " style="left:436.00px;top:637.00px;font-size:16.8px;color:#c9d6c4;font-weight:normal;font-family:'Liberation Sans';transform-origin:0 0;transform:scaleX(1.0217);">Orders</div>
<svg class="s" style="left:592px;top:635px;" width="24" height="20" viewBox="0 0 24 20"><circle cx="11.5" cy="10" r="9" fill="#33633a"/><path d="M6 13 L12 6 L18 13 Z" fill="#c8cfc6"/></svg>
<svg class="s" style="left:404px;top:669.5px;" width="15" height="15" viewBox="0 0 15 15"><rect x="0.8" y="0.8" width="13.4" height="13.4" rx="1.5" fill="none" stroke="#555" stroke-width="1.5"/><path d="M3.5 7.5 H11.5" stroke="#555" stroke-width="1.8"/></svg>
<svg class="s" style="left:424px;top:669px;" width="18" height="17" viewBox="0 0 18 17"><rect x="0.5" y="0.5" width="17" height="16" fill="#3f8f45"/><rect x="2.5" y="2.5" width="13" height="12" fill="#68aa68"/></svg>
<div class="t " style="left:448.00px;top:670.00px;font-size:13.6px;color:#222;font-weight:bold;font-family:'Liberation Sans';">Orders</div>
<svg class="s" style="left:421px;top:687px;" width="20" height="18" viewBox="0 0 20 18"><circle cx="6" cy="6" r="5" fill="#d6b24e"/><path d="M9 9 L17 16" stroke="#d6b24e" stroke-width="3.2" stroke-linecap="round"/><circle cx="5" cy="5" r="1.3" fill="#f4e6b0"/></svg>
<div class="t " style="left:447.00px;top:690.00px;font-size:13.6px;color:#333;font-weight:normal;font-family:'Liberation Sans';">OrderID</div>
<svg class="s" style="left:422px;top:710.5px;" width="22" height="14" viewBox="0 0 22 14"><defs><linearGradient id="fg" x1="0" y1="0" x2="0" y2="1"><stop offset="0" stop-color="#d6b23e"/><stop offset="1" stop-color="#b8921a"/></linearGradient></defs><path d="M0 7 L6.5 1 H20 V13 H6.5 Z" fill="url(#fg)"/></svg>
<div class="t " style="left:447.00px;top:710.00px;font-size:13.6px;color:#333;font-weight:normal;font-family:'Liberation Sans';">CustomerID</div>
<svg class="s" style="left:422px;top:730.5px;" width="22" height="14" viewBox="0 0 22 14"><defs><linearGradient id="fg" x1="0" y1="0" x2="0" y2="1"><stop offset="0" stop-color="#d6b23e"/><stop offset="1" stop-color="#b8921a"/></linearGradient></defs><path d="M0 7 L6.5 1 H20 V13 H6.5 Z" fill="url(#fg)"/></svg>
<div class="t " style="left:447.00px;top:730.00px;font-size:13.6px;color:#333;font-weight:normal;font-family:'Liberation Sans';">EmployeeID</div>
<svg class="s" style="left:422px;top:750.5px;" width="22" height="14" viewBox="0 0 22 14"><defs><linearGradient id="fg" x1="0" y1="0" x2="0" y2="1"><stop offset="0" stop-color="#d6b23e"/><stop offset="1" stop-color="#b8921a"/></linearGradient></defs><path d="M0 7 L6.5 1 H20 V13 H6.5 Z" fill="url(#fg)"/></svg>
<div class="t " style="left:447.00px;top:750.00px;font-size:13.6px;color:#333;font-weight:normal;font-family:'Liberation Sans';">OrderDate</div>
<svg class="s" style="left:422px;top:770.5px;" width="22" height="14" viewBox="0 0 22 14"><defs><linearGradient id="fg" x1="0" y1="0" x2="0" y2="1"><stop offset="0" stop-color="#d6b23e"/><stop offset="1" stop-color="#b8921a"/></linearGradient></defs><path d="M0 7 L6.5 1 H20 V13 H6.5 Z" fill="url(#fg)"/></svg>
<div class="t " style="left:447.00px;top:770.00px;font-size:13.6px;color:#333;font-weight:normal;font-family:'Liberation Sans';">RequiredDate</div>
<svg class="s" style="left:422px;top:790.5px;" width="22" height="14" viewBox="0 0 22 14"><defs><linearGradient id="fg" x1="0" y1="0" x2="0" y2="1"><stop offset="0" stop-color="#d6b23e"/><stop offset="1" stop-color="#b8921a"/></linearGradient></defs><path d="M0 7 L6.5 1 H20 V13 H6.5 Z" fill="url(#fg)"/></svg>
<div class="t " style="left:447.00px;top:790.00px;font-size:13.6px;color:#333;font-weight:normal;font-family:'Liberation Sans';">ShippedDate</div>
<svg class="s" style="left:422px;top:810.5px;" width="22" height="14" viewBox="0 0 22 14"><defs><linearGradient id="fg" x1="0" y1="0" x2="0" y2="1"><stop offset="0" stop-color="#d6b23e"/><stop offset="1" stop-color="#b8921a"/></linearGradient></defs><path d="M0 7 L6.5 1 H20 V13 H6.5 Z" fill="url(#fg)"/></svg>
<div class="t " style="left:447.00px;top:810.00px;font-size:13.6px;color:#333;font-weight:normal;font-family:'Liberation Sans';">ShipVia</div>
<svg class="s" style="left:422px;top:830.5px;" width="22" height="14" viewBox="0 0 22 14"><defs><linearGradient id="fg" x1="0" y1="0" x2="0" y2="1"><stop offset="0" stop-color="#d6b23e"/><stop offset="1" stop-color="#b8921a"/></linearGradient></defs><path d="M0 7 L6.5 1 H20 V13 H6.5 Z" fill="url(#fg)"/></svg>
<div class="t " style="left:447.00px;top:830.00px;font-size:13.6px;color:#333;font-weight:normal;font-family:'Liberation Sans';">Freight</div>
<svg class="s" style="left:422px;top:850.5px;" width="22" height="14" viewBox="0 0 22 14"><defs><linearGradient id="fg" x1="0" y1="0" x2="0" y2="1"><stop offset="0" stop-color="#d6b23e"/><stop offset="1" stop-color="#b8921a"/></linearGradient></defs><path d="M0 7 L6.5 1 H20 V13 H6.5 Z" fill="url(#fg)"/></svg>
<div class="t " style="left:447.00px;top:850.00px;font-size:13.6px;color:#333;font-weight:normal;font-family:'Liberation Sans';">ShipName</div>
<svg class="s" style="left:422px;top:870.5px;" width="22" height="14" viewBox="0 0 22 14"><defs><linearGradient id="fg" x1="0" y1="0" x2="0" y2="1"><stop offset="0" stop-color="#d6b23e"/><stop offset="1" stop-color="#b8921a"/></linearGradient></defs><path d="M0 7 L6.5 1 H20 V13 H6.5 Z" fill="url(#fg)"/></svg>
<div class="t " style="left:447.00px;top:870.00px;font-size:13.6px;color:#333;font-weight:normal;font-family:'Liberation Sans';">ShipAddress</div>
<svg class="s" style="left:422px;top:890.5px;" width="22" height="14" viewBox="0 0 22 14"><defs><linearGradient id="fg" x1="0" y1="0" x2="0" y2="1"><stop offset="0" stop-color="#d6b23e"/><stop offset="1" stop-color="#b8921a"/></linearGradient></defs><path d="M0 7 L6.5 1 H20 V13 H6.5 Z" fill="url(#fg)"/></svg>
<div class="t " style="left:447.00px;top:890.00px;font-size:13.6px;color:#333;font-weight:normal;font-family:'Liberation Sans';">ShipCity</div>
<svg class="s" style="left:422px;top:910.5px;" width="22" height="14" viewBox="0 0 22 14"><defs><linearGradient id="fg" x1="0" y1="0" x2="0" y2="1"><stop offset="0" stop-color="#d6b23e"/><stop offset="1" stop-color="#b8921a"/></linearGradient></defs><path d="M0 7 L6.5 1 H20 V13 H6.5 Z" fill="url(#fg)"/></svg>
<div class="t " style="left:447.00px;top:910.00px;font-size:13.6px;color:#333;font-weight:normal;font-family:'Liberation Sans';">ShipRegion</div>
<svg class="s" style="left:422px;top:930.5px;" width="22" height="14" viewBox="0 0 22 14"><defs><linearGradient id="fg" x1="0" y1="0" x2="0" y2="1"><stop offset="0" stop-color="#d6b23e"/><stop offset="1" stop-color="#b8921a"/></linearGradient></defs><path d="M0 7 L6.5 1 H20 V13 H6.5 Z" fill="url(#fg)"/></svg>
<div class="t " style="left:447.00px;top:930.00px;font-size:13.6px;color:#333;font-weight:normal;font-family:'Liberation Sans';">ShipPostalCode</div>
<svg class="s" style="left:422px;top:950.5px;" width="22" height="14" viewBox="0 0 22 14"><defs><linearGradient id="fg" x1="0" y1="0" x2="0" y2="1"><stop offset="0" stop-color="#d6b23e"/><stop offset="1" stop-color="#b8921a"/></linearGradient></defs><path d="M0 7 L6.5 1 H20 V13 H6.5 Z" fill="url(#fg)"/></svg>
<div class="t " style="left:447.00px;top:950.00px;font-size:13.6px;color:#333;font-weight:normal;font-family:'Liberation Sans';">ShipCountry</div>
<svg class="s" style="left:622px;top:880px;" width="100" height="90" viewBox="0 0 100 90"><path d="M15 17.700000000000045 H28 L34 8" stroke="#5d8f5c" stroke-width="1" fill="none"/><rect x="0" y="13.700000000000045" width="16" height="8" rx="3" fill="#4e8a4e"/><path d="M15 37.700000000000045 H28 L50 8" stroke="#5d8f5c" stroke-width="1" fill="none"/><rect x="0" y="33.700000000000045" width="16" height="8" rx="3" fill="#4e8a4e"/><path d="M15 57.5 H28 L66 8" stroke="#5d8f5c" stroke-width="1" fill="none"/><rect x="0" y="53.5" width="16" height="8" rx="3" fill="#4e8a4e"/><path d="M15 77.60000000000002 H28 L81 8" stroke="#5d8f5c" stroke-width="1" fill="none"/><rect x="0" y="73.60000000000002" width="16" height="8" rx="3" fill="#4e8a4e"/></svg>
<div class="b" style="left:759px;top:885px;width:228px;height:85px;background:rgba(50,58,70,0.14);border-radius:0 0 9px 9px;"></div>
<div class="b" style="left:756.5px;top:880px;width:228.5px;height:85px;background:#a39ea5;border-radius:0 0 9px 9px;"></div>
<div class="b" style="left:758px;top:893.5px;width:225px;height:71px;background:#ababab;border-radius:0 0 8px 8px;"></div>
<div class="b" style="left:608px;top:247px;width:754px;height:641px;background:#fbfcfc;box-shadow:1px 1px 5px 1px rgba(40,48,58,0.4);"></div>
<div class="b" style="left:608px;top:247px;width:1px;height:641px;background:#737980;"></div>
<svg class="s" style="left:614px;top:254px;" width="20" height="20" viewBox="0 0 20 20"><path d="M14 1 H1 V13.5 M5.5 18 H18 V5.5" stroke="#9ba3aa" stroke-width="2.2" fill="none" stroke-linecap="round"/><path d="M1.5 18.5 L18.5 1" stroke="#d9c7a0" stroke-width="1.4"/><path d="M10 5.5 L14.5 10 L10 10 Z M5.5 9.5 L10 14 L5.5 14 Z" fill="#c8a850"/><rect x="9.5" y="5.5" width="4.5" height="4" fill="#c8a850"/><rect x="5.5" y="9.5" width="4.5" height="4.5" fill="#c8a850"/></svg>
<div class="t " style="left:639.50px;top:254.00px;font-size:16.2px;color:#8a8a8a;font-weight:normal;font-family:'Liberation Sans';transform-origin:0 0;transform:scaleX(0.8916);">TreeJoin : Tree Join Transformation Properties</div>
<div class="b" style="left:1209px;top:262px;width:12px;height:1px;background:#e2e2e2;"></div>
<div class="b" style="left:1267px;top:257px;width:12.5px;height:12.5px;background:transparent;border:1.2px solid #444;box-sizing:border-box;"></div>
<svg class="s" style="left:1326px;top:257px;" width="13" height="13" viewBox="0 0 13 13"><path d="M0.5 0.5 L12.5 12.5 M12.5 0.5 L0.5 12.5" stroke="#444" stroke-width="1.1"/></svg>
<div class="b" style="left:611px;top:283.5px;width:749px;height:45px;background:#eef3f5;"></div>
<div class="b" style="left:611px;top:328.5px;width:749px;height:4.5px;background:#fbfcfc;"></div>
<svg class="s" style="left:622px;top:293px;" width="24" height="24" viewBox="0 0 24 24"><circle cx="11.5" cy="11.5" r="9.3" fill="none" stroke="#4a73a0" stroke-width="2.4"/><path d="M16 11.5 H7.5 M10.5 8 L6.8 11.5 L10.5 15" stroke="#3f6a98" stroke-width="2.4" fill="none"/></svg>
<svg class="s" style="left:654px;top:303px;" width="9" height="6" viewBox="0 0 9 6"><path d="M0.8 0.8 L8 0.8 L4.4 5 Z" fill="#fff" stroke="#111" stroke-width="1.1"/></svg>
<svg class="s" style="left:673px;top:293px;" width="24" height="24" viewBox="0 0 24 24"><circle cx="11.5" cy="11.5" r="9.3" fill="none" stroke="#4a73a0" stroke-width="2.4"/><path d="M7 11.5 H15.5 M12.5 8 L16.2 11.5 L12.5 15" stroke="#3f6a98" stroke-width="2.4" fill="none"/></svg>
<svg class="s" style="left:704px;top:303px;" width="9" height="6" viewBox="0 0 9 6"><path d="M0.8 0.8 L8 0.8 L4.4 5 Z" fill="#fff" stroke="#111" stroke-width="1.1"/></svg>
<div class="t " style="left:1102.47px;top:289.00px;font-size:16.2px;color:#222;font-weight:normal;font-family:'Liberation Sans';transform-origin:0 0;transform:scaleX(0.9258);">Editing:</div>
<div class="b" style="left:1157px;top:286px;width:185px;height:24.5px;background:#fafcfc;"></div>
<div class="b" style="left:1330px;top:288px;width:12px;height:20px;background:#eef3f5;"></div>
<div class="t " style="left:1161.00px;top:289.00px;font-size:16.2px;color:#222;font-weight:normal;font-family:'Liberation Sans';transform-origin:0 0;transform:scaleX(0.8472);">TreeJoin</div>
<svg class="s" style="left:1331px;top:295px;" width="9" height="6" viewBox="0 0 9 6"><path d="M0.8 0.8 L8 0.8 L4.4 5 Z" fill="#fff" stroke="#111" stroke-width="1.1"/></svg>
<div class="b" style="left:609.5px;top:332.5px;width:746.5px;height:161px;background:#fbfcfc;border:1px solid #dde2e6;border-bottom:none;box-sizing:border-box;"></div>
<div class="b" style="left:631.5px;top:357.5px;width:16.5px;height:16.5px;background:#fdfdfd;border:1.3px solid #333;box-sizing:border-box;"></div>
<div class="t " style="left:655.00px;top:358.00px;font-size:15.2px;color:#333;font-weight:normal;font-family:'Liberation Sans';transform-origin:0 0;transform:scaleX(0.8773);">Join In Database</div>
<div class="t " style="left:631.00px;top:380.00px;font-size:15.2px;color:#333;font-weight:normal;font-family:'Liberation Sans';transform-origin:0 0;transform:scaleX(0.8671);">(Applicable only when sources are tables from the same database or a join of tables from the same database)</div>
<div class="b" style="left:631.5px;top:410px;width:16.5px;height:16.5px;background:#fdfdfd;border:1.3px solid #333;box-sizing:border-box;"></div>
<div class="t " style="left:655.00px;top:408.00px;font-size:15.2px;color:#333;font-weight:normal;font-family:'Liberation Sans';transform-origin:0 0;transform:scaleX(0.8626);">Case Sensitive</div>
<div class="b" style="left:610px;top:439.5px;width:746px;height:2px;background:#d3d8dc;"></div>
<div class="b" style="left:610px;top:464.5px;width:746px;height:1.2px;background:#d7dce0;"></div>
<div class="b" style="left:610px;top:492.5px;width:746px;height:1.2px;background:#d7dce0;"></div>
<div class="b" style="left:655px;top:441px;width:1.2px;height:52px;background:#d7dce0;"></div>
<div class="b" style="left:1006px;top:441px;width:1.2px;height:52px;background:#d7dce0;"></div>
<div class="t " style="left:664.73px;top:445.00px;font-size:14.8px;color:#222;font-weight:normal;font-family:'Liberation Sans';transform-origin:0 0;transform:scaleX(0.8733);">Parent Field</div>
<div class="t " style="left:1014.50px;top:445.00px;font-size:14.8px;color:#222;font-weight:normal;font-family:'Liberation Sans';transform-origin:0 0;transform:scaleX(0.8683);">Child Field</div>
<svg class="s" style="left:618px;top:477px;" width="9" height="9" viewBox="0 0 9 9"><path d="M4.5 1 V8 M1.3 2.7 L7.7 6.3 M7.7 2.7 L1.3 6.3" stroke="#444" stroke-width="1.5"/><circle cx="4.5" cy="4.5" r="1.8" fill="#444"/></svg>
<div class="b" style="left:1037px;top:859.5px;width:80px;height:28.5px;background:#edf3f5;border:1.5px solid #d9dde0;box-sizing:border-box;"></div>
<div class="t " style="left:1062.68px;top:865.00px;font-size:15.4px;color:#222;font-weight:normal;font-family:'Liberation Sans';transform-origin:0 0;transform:scaleX(0.8239);">Prev</div>
<div class="b" style="left:1119.5px;top:859.5px;width:79px;height:28.5px;background:#edf3f5;border:1.5px solid #d9dde0;box-sizing:border-box;"></div>
<div class="t " style="left:1144.08px;top:865.00px;font-size:15.4px;color:#222;font-weight:normal;font-family:'Liberation Sans';transform-origin:0 0;transform:scaleX(0.8225);">Next</div>
<div class="b" style="left:1200.5px;top:859.5px;width:80px;height:28.5px;background:#edf3f5;border:1.5px solid #d9dde0;box-sizing:border-box;"></div>
<div class="t " style="left:1228.90px;top:865.00px;font-size:15.4px;color:#222;font-weight:normal;font-family:'Liberation Sans';transform-origin:0 0;transform:scaleX(0.8315);">OK</div>
<div class="b" style="left:1282px;top:859.5px;width:80px;height:28.5px;background:#edf3f5;border:1.5px solid #d9dde0;box-sizing:border-box;"></div>
<div class="t " style="left:1298.50px;top:865.00px;font-size:15.4px;color:#222;font-weight:normal;font-family:'Liberation Sans';transform-origin:0 0;transform:scaleX(0.8760);">Cancel</div>
<svg class="s" style="left:1069px;top:727px;" width="14" height="21" viewBox="0 0 14 21"><path d="M1 1 L1 16 L4.5 12.5 L7 18.5 L9.5 17.5 L7 11.5 L12 11.5 Z" fill="#fff" stroke="#111" stroke-width="1.1" stroke-linejoin="round"/></svg>
</body></html>
